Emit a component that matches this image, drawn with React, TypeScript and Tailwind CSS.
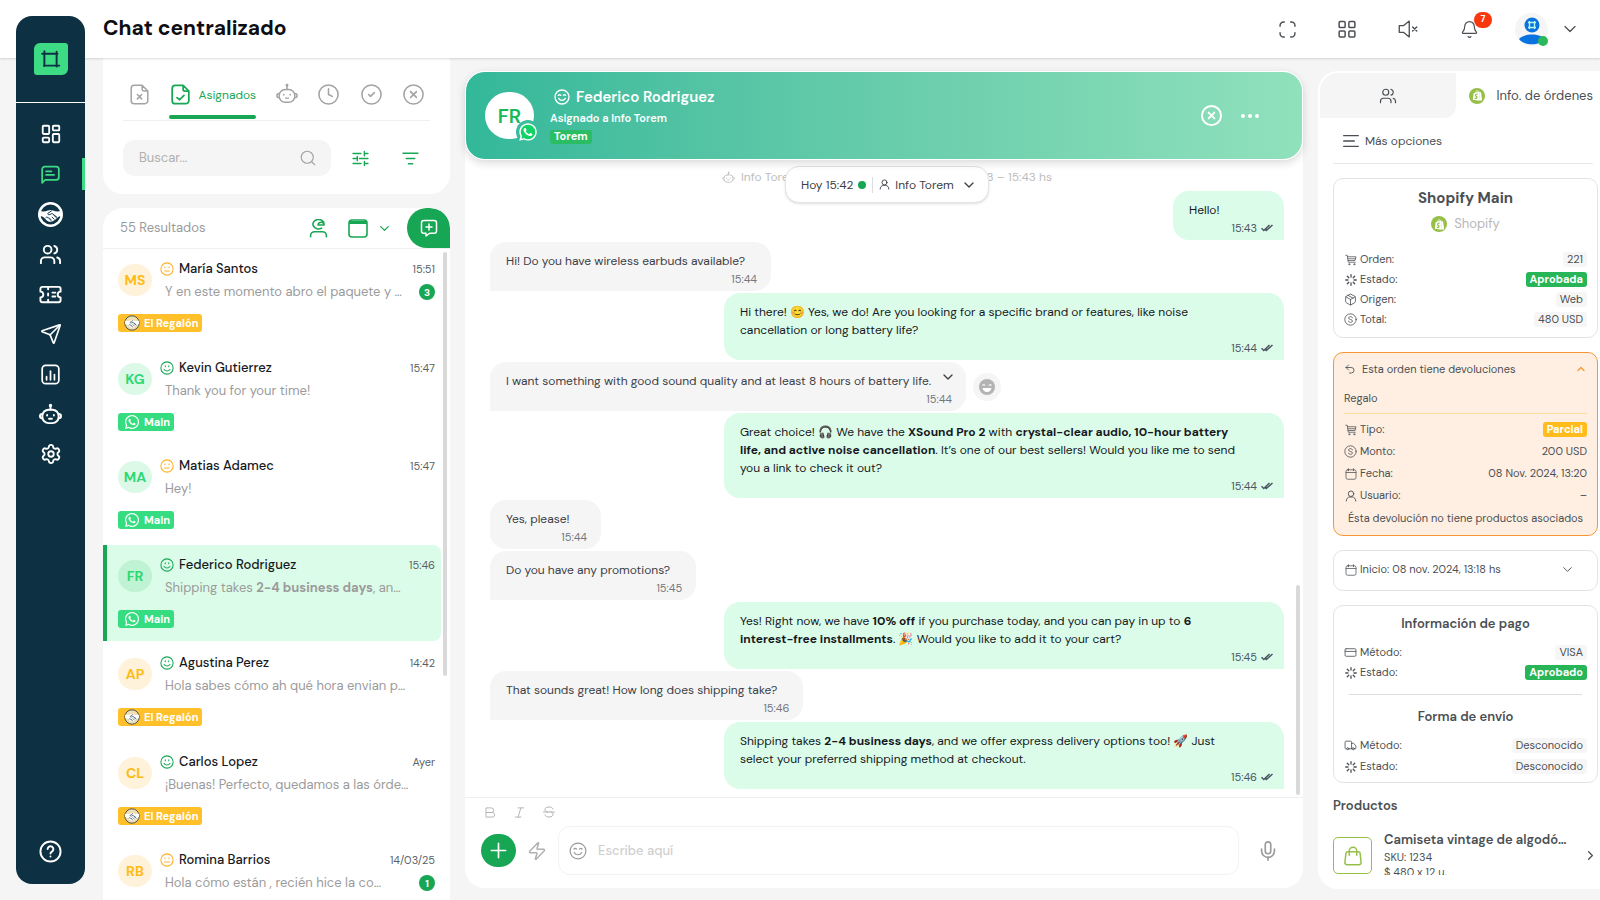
import React from 'react';
import {
  Bell,
  ChevronDown,
  ChevronRight,
  ChevronUp,
  CircleCheck,
  CircleX,
  Clock,
  CreditCard,
  LayoutDashboard,
  Mic,
  Package,
  Search,
  Send,
  Settings,
  Truck,
  Undo2,
  Users,
  Zap,
} from 'lucide-react';
import { FaShopify, FaWhatsapp } from 'react-icons/fa';

type IconProps = { size?: number; stroke?: number; className?: string };

function Svg({ size = 24, stroke = 2, className, children }: IconProps & { children: React.ReactNode }) {
  return (
    <svg
      width={size}
      height={size}
      viewBox="0 0 24 24"
      fill="none"
      stroke="currentColor"
      strokeWidth={stroke}
      strokeLinecap="round"
      strokeLinejoin="round"
      className={className}
      aria-hidden="true"
    >
      {children}
    </svg>
  );
}

const BotIcon = (p: IconProps) => (
  <Svg {...p}>
    <circle cx="12" cy="2.5" r="0.8" />
    <path d="M12 3.500V7" />
    <path d="M3.500 16c-1.800 0-2.500-.8-2.500-2.200s.7-2.300 2.500-2.300M20.500 16c1.800 0 2.500-.8 2.500-2.200s-.7-2.300-2.500-2.300" />
    <rect x="3.500" y="7" width="17" height="14" rx="6.500" />
    <path d="M8.500 12.500v.5M15.500 12.500v.5M10.500 16.500h3" />
  </Svg>
);

const FileXIcon = (p: IconProps) => (
  <Svg {...p}>
    <path d="M15 1.500H6a3.500 3.500 0 0 0-3.500 3.500v14A3.500 3.500 0 0 0 6 22.500h12a3.500 3.500 0 0 0 3.500-3.500V8zM15 1.500V6a2 2 0 0 0 2 2h4.500" />
    <path d="m9.500 12 5 5M14.500 12l-5 5" />
  </Svg>
);

const FileCheckIcon = (p: IconProps) => (
  <Svg {...p}>
    <path d="M15 1.500H6a3.500 3.500 0 0 0-3.500 3.500v14A3.500 3.500 0 0 0 6 22.500h12a3.500 3.500 0 0 0 3.500-3.500V8zM15 1.500V6a2 2 0 0 0 2 2h4.500" />
    <path d="m8 15.500 3 2.500 5-5" />
  </Svg>
);

const MuteIcon = (p: IconProps) => (
  <Svg {...p}>
    <path d="M13.500 2.500v19L6.500 16H1.500V8h5zM17.500 9.500l5 5M22.500 9.500l-5 5" />
  </Svg>
);

const ChatIcon = (p: IconProps) => (
  <Svg {...p}>
    <path d="M2.500 21.500V6a3 3 0 0 1 3-3h13a3 3 0 0 1 3 3v9a3 3 0 0 1-3 3H6z" />
    <path d="M7 8.500h6M7 12.500h9" />
  </Svg>
);

const TicketIcon = (p: IconProps) => (
  <Svg {...p}>
    <path d="M1.500 9V6a2 2 0 0 1 2-2h17a2 2 0 0 1 2 2v3a3 3 0 0 0 0 6v3a2 2 0 0 1-2 2h-17a2 2 0 0 1-2-2v-3a3 3 0 0 0 0-6z" />
    <path d="M9.500 4.500v2M9.500 11v2M9.500 17.500v2M14 10h3M14 14h3" />
  </Svg>
);

const ReportIcon = (p: IconProps) => (
  <Svg {...p}>
    <rect x="2.500" y="1.500" width="19" height="21" rx="4" />
    <path d="M7.500 18v-3.500M12 18V8M16.500 18v-6" />
  </Svg>
);

const HelpIcon = (p: IconProps) => (
  <Svg {...p}>
    <circle cx="12" cy="12" r="10.500" />
    <path d="M9 9.500a3 3 0 1 1 4.500 2.600c-1 .6-1.500 1-1.500 2M12 17.200v.1" />
  </Svg>
);

const SmileIcon = (p: IconProps) => (
  <Svg {...p}>
    <circle cx="12" cy="12" r="10.500" />
    <path d="M9 8v2M15 8v2M7 14.500c1.200 1.800 3 2.500 5 2.500s3.800-.7 5-2.500" />
  </Svg>
);

const MehIcon = (p: IconProps) => (
  <Svg {...p}>
    <circle cx="12" cy="12" r="10.500" />
    <path d="M8.500 8.500v1.500M15.500 8.500v1.500M8 15.500h8" />
  </Svg>
);

const HappyIcon = (p: IconProps) => (
  <Svg {...p}>
    <circle cx="12" cy="12" r="10.500" />
    <path d="M6.500 9.500c.8-1.200 2.700-1.200 3.500 0M14 9.500c.8-1.200 2.700-1.200 3.500 0M7 14c1.200 2.200 3 3 5 3s3.800-.8 5-3" />
  </Svg>
);

const PersonIcon = (p: IconProps) => (
  <Svg {...p}>
    <circle cx="12" cy="7.500" r="5.500" />
    <path d="M2.500 22c0-5 3.500-8 7-8h5c3.500 0 7 3 7 8" />
  </Svg>
);

const AgentIcon = (p: IconProps) => (
  <Svg {...p}>
    <path d="M19 7a7 6 0 1 0-3 4.500M11.500 7.500H19c0-2-1.500-3.500-3.500-3.500-2.500 0-4 1.500-4 3.500z" />
    <path d="M2 22.500v-1.500a5 5 0 0 1 5-5h10a5 5 0 0 1 5 5v1.500" />
  </Svg>
);

const CalendarIcon = (p: IconProps) => (
  <Svg {...p}>
    <rect x="2" y="3.500" width="20" height="19" rx="3.500" />
    <path d="M2 9h20M7 1.500v4M17 1.500v4" />
  </Svg>
);

const CartIcon = (p: IconProps) => (
  <Svg {...p}>
    <path d="M1.500 2.500h3l2 14h14M5 5.500h17l-2 7.500H6.500M6 9.500h15" />
    <circle cx="8.500" cy="20.500" r="1.200" />
    <circle cx="18.500" cy="20.500" r="1.200" />
  </Svg>
);

const LoaderIcon = (p: IconProps) => (
  <Svg stroke={2.6} {...p}>
    <path d="M12 1.500V6M12 18v4.500M1.500 12H6M18 12h4.500M4.600 4.600l3 3M16.400 16.400l3 3M4.600 19.400l3-3M16.400 7.600l3-3" />
  </Svg>
);

const CoinIcon = (p: IconProps) => (
  <Svg {...p}>
    <circle cx="12" cy="12" r="10.500" />
    <path d="M15.500 9c-.3-1.500-1.700-2.300-3.500-2.300-2 0-3.500 1-3.500 2.600 0 3.700 7 1.700 7 5.400 0 1.600-1.500 2.600-3.500 2.600-1.800 0-3.200-.8-3.500-2.300" />
  </Svg>
);

const SlidersIcon = (p: IconProps) => (
  <Svg {...p}>
    <path d="M1.500 5h11M17.500 5h5M17.500 2v6M1.500 12h5M10.500 12h12M7.500 9v6M1.500 19h11M17.500 19h5M17.500 16v6" />
  </Svg>
);

const GridIcon = (p: IconProps) => (
  <Svg {...p}>
    <rect x="1.500" y="2" width="8" height="8" rx="1.500" />
    <rect x="14.500" y="2" width="8" height="8" rx="1.500" />
    <rect x="1.500" y="14.500" width="8" height="8" rx="1.500" />
    <rect x="14.500" y="14.500" width="8" height="8" rx="1.500" />
  </Svg>
);

const ExpandIcon = (p: IconProps) => (
  <Svg {...p}>
    <path d="M1.500 7.500v-1a5 5 0 0 1 5-5h1M16.500 1.500h1a5 5 0 0 1 5 5v1M22.500 16.500v1a5 5 0 0 1-5 5h-1M7.500 22.500h-1a5 5 0 0 1-5-5v-1" />
  </Svg>
);

const BagIcon = (p: IconProps) => (
  <Svg {...p}>
    <path d="M5.500 7h13a2 2 0 0 1 2 1.800l1.200 11a2.500 2.500 0 0 1-2.500 2.700H4.800a2.500 2.500 0 0 1-2.500-2.700l1.200-11a2 2 0 0 1 2-1.800z" />
    <path d="M7.500 11V6a4.500 4.500 0 0 1 9 0v5" />
  </Svg>
);

const DoubleCheck = () => (
  <svg width="12" height="8" viewBox="0 0 12 8" fill="none" stroke="#4b5563" strokeWidth="1.500" aria-hidden="true">
    <path d="M.5 4.200 2.800 6.500l5.700-5.500M4.300 5.500l1 1L11.500 1" />
  </svg>
);

function HandshakeLogo({ size, light }: { size: number; light?: boolean }) {
  return (
    <svg width={size} height={size} viewBox="0 0 24 24" aria-hidden="true">
      <circle
        cx="12"
        cy="12"
        r="10.800"
        fill={light ? '#f0dfb4' : '#0d3142'}
        stroke={light ? '#3f4b50' : '#fff'}
        strokeWidth={light ? 1.4 : 2.4}
      />
      <path
        d="M1.500 8.500c3 1 5.500.8 8-.3 2-.8 3.500-.6 5 0 2.500 1 5 1.200 8 .3v5c-2 .3-3.500 1-4.500 2.200-2 2-4 3.300-6 3.300s-3.500-1.200-5-2.800c-1.500-1.600-3-2.500-5.500-2.700z"
        fill="#fff"
      />
      <path
        d="M13 8.500 9.500 10.800c-.6 1.200.8 1.800 2 1.200l2-1 4.500 3.500M7.500 15c1-1 2-.5 2 .5 1-.5 1.800 0 1.700 1 1-.3 1.600.3 1.300 1.300M13.500 14.500l2 2M15.500 13l2 2"
        fill="none"
        stroke="#0d3142"
        strokeWidth="0.900"
        strokeLinecap="round"
      />
    </svg>
  );
}

function ShopifyLogo() {
  return (
    <span className="flex size-4 items-center justify-center rounded-full bg-[#95bf47] text-white">
      <FaShopify size={11} />
    </span>
  );
}

const navItems = [
  { label: 'Inicio', icon: <LayoutDashboard size={22} strokeWidth={2} /> },
  { label: 'Chat', icon: <ChatIcon size={21} />, active: true },
  { label: 'Acuerdos', icon: <HandshakeLogo size={25} /> },
  { label: 'Contactos', icon: <Users size={23} strokeWidth={2} /> },
  { label: 'Tickets', icon: <TicketIcon size={23} /> },
  { label: 'Campañas', icon: <Send size={22} strokeWidth={1.8} /> },
  { label: 'Reportes', icon: <ReportIcon size={21} /> },
  { label: 'Bots', icon: <BotIcon size={23} /> },
  { label: 'Ajustes', icon: <Settings size={22} strokeWidth={2} /> },
];

function Sidebar() {
  return (
    <aside className="z-20 col-start-1 row-span-2 row-start-1 mb-4 ml-4 mr-[18px] mt-4 flex flex-col rounded-2xl bg-[#0d3142] text-white">
      <div className="flex h-[87px] items-center justify-center border-b border-white">
        <span className="flex h-8 w-[34px] items-center justify-center rounded-bl-[3px] rounded-br-md rounded-tl-md rounded-tr-[3px] bg-[#3ddc84] text-[#0d3142]">
          <Svg size={21} stroke={2.2}>
            <path d="M5 2.500v17M2.500 5.500H20M19 3v17M4.500 19H22" />
          </Svg>
        </span>
      </div>
      <nav className="mt-[11px] flex flex-col" aria-label="Principal">
        {navItems.map((item) => (
          <a
            key={item.label}
            href="#"
            aria-label={item.label}
            className={`relative flex h-10 items-center justify-center ${item.active ? 'text-[#3ddc84]' : 'text-white'}`}
          >
            {item.icon}
            {item.active && <span className="absolute right-0 top-1 h-8 w-[3px] bg-[#3ddc84]" />}
          </a>
        ))}
      </nav>
      <a href="#" aria-label="Ayuda" className="mb-[21px] mt-auto flex justify-center">
        <HelpIcon size={23} />
      </a>
    </aside>
  );
}

function TopBar() {
  return (
    <header className="z-10 col-span-2 col-start-1 row-start-1 flex items-center bg-white pl-[103px] pr-5 text-[#4b4f54] shadow-[0_1px_2px_rgba(0,0,0,0.15)]">
      <h1 className="pb-[3px] text-[21px] font-bold leading-7 text-[#0d0d12]">Chat centralizado</h1>
      <div className="ml-auto flex items-center">
        <button aria-label="Pantalla completa" className="mr-[42px]"><ExpandIcon size={17} /></button>
        <button aria-label="Aplicaciones" className="mr-[42px]"><GridIcon size={18} /></button>
        <button aria-label="Silenciar" className="mr-[42px]"><MuteIcon size={20} stroke={1.6} /></button>
        <button aria-label="Notificaciones" className="relative mr-9">
          <Bell size={19} strokeWidth={1.5} />
          <span className="absolute -top-2 left-[14px] flex h-4 w-[18px] items-center justify-center rounded-full bg-[#f9370e] text-[9px] font-bold text-white">
            7
          </span>
        </button>
        <button aria-label="Perfil" className="relative mr-3 size-[33px] rounded-full bg-[#f5f5f5]">
          <svg viewBox="0 0 33 33" className="size-full" aria-hidden="true">
            <circle cx="17" cy="12" r="7.500" fill="#0a73e0" />
            <path d="M4 26c5-6 21-6 26 0-5 7-21 7-26 0z" fill="#0a73e0" />
            <path d="M14.500 8v8M19.500 8v8M13 9.500h8M13 14.500h8" stroke="#b9f5e6" strokeWidth="1.400" />
            <circle cx="28" cy="28" r="5" fill="#2bb75b" />
          </svg>
        </button>
        <button aria-label="Abrir menú"><ChevronDown size={20} strokeWidth={1.5} /></button>
      </div>
    </header>
  );
}

function Filters() {
  return (
    <section className="rounded-b-[20px] bg-white px-5 pb-[18px] pt-5 text-[#a3a3a3]">
      <div className="flex h-[43px] items-start justify-between border-b border-[#efefef] pl-[6px] pr-[5px]">
        <button aria-label="Sin asignar" className="pt-1.5"><FileXIcon size={21} stroke={1.7} /></button>
        <button className="relative flex h-[41px] items-start gap-[7px] pl-px pt-1.5 text-[#17a653]">
          <FileCheckIcon size={21} />
          <span className="text-xs leading-[22px]">Asignados</span>
          <span className="absolute inset-x-0 bottom-0 h-1 rounded-full bg-[#17a653]" />
        </button>
        <button aria-label="Bots" className="pt-[5px]"><BotIcon size={22} stroke={1.6} /></button>
        <button aria-label="Pendientes" className="pt-[5px]"><Clock size={23} strokeWidth={1.6} /></button>
        <button aria-label="Resueltos" className="pt-[5px]"><CircleCheck size={23} strokeWidth={1.6} /></button>
        <button aria-label="Cerrados" className="pt-[5px]"><CircleX size={23} strokeWidth={1.6} /></button>
      </div>
      <div className="mt-[19px] flex items-center">
        <label className="flex h-9 w-[208px] items-center rounded-xl bg-[#f5f5f5] pl-4 pr-[14px]">
          <input
            aria-label="Buscar"
            placeholder="Buscar..."
            className="min-w-0 flex-1 bg-transparent text-[13px] outline-none placeholder:text-[#b0b0b0]"
          />
          <Search size={18} strokeWidth={1.5} />
        </label>
        <button aria-label="Filtros" className="ml-[21px] text-[#17a653]"><SlidersIcon size={17} /></button>
        <button aria-label="Ordenar" className="ml-[33px] text-[#17a653]">
          <Svg size={17}><path d="M1.500 4.500h21M6 12h12M9 19.500h6" /></Svg>
        </button>
      </div>
    </section>
  );
}

type Conversation = {
  initials: string;
  name: string;
  time: string;
  preview: React.ReactNode;
  mood: 'happy' | 'meh';
  channel: 'main' | 'regalon';
  unread?: number;
  selected?: boolean;
};

const conversations: Conversation[] = [
  { initials: 'MS', name: 'María Santos', time: '15:51', preview: 'Y en este momento abro el paquete y …', mood: 'meh', channel: 'regalon', unread: 3 },
  { initials: 'KG', name: 'Kevin Gutierrez', time: '15:47', preview: 'Thank you for your time!', mood: 'happy', channel: 'main' },
  { initials: 'MA', name: 'Matias Adamec', time: '15:47', preview: 'Hey!', mood: 'meh', channel: 'main' },
  { initials: 'FR', name: 'Federico Rodriguez', time: '15:46', preview: <>Shipping takes <b>2-4 business days</b>, an…</>, mood: 'happy', channel: 'main', selected: true },
  { initials: 'AP', name: 'Agustina Perez', time: '14:42', preview: 'Hola sabes cómo ah qué hora envian p…', mood: 'happy', channel: 'regalon' },
  { initials: 'CL', name: 'Carlos Lopez', time: 'Ayer', preview: '¡Buenas! Perfecto, quedamos a las órde…', mood: 'happy', channel: 'regalon' },
  { initials: 'RB', name: 'Romina Barrios', time: '14/03/25', preview: 'Hola cómo están , recién hice la co…', mood: 'meh', channel: 'regalon', unread: 1 },
];

function avatarColors(c: Conversation) {
  if (c.selected) return 'bg-[#bff3d4] text-[#2fd873]';
  return c.channel === 'main' ? 'bg-[#dcf9e8] text-[#2fd873]' : 'bg-[#fff2da] text-[#fdbb16]';
}

function ConversationRow({ c }: { c: Conversation }) {
  return (
    <li className={`mb-[3px] mr-[9px] h-24 rounded-r-lg border-l-4 pl-[11px] pr-[6px] pt-[9px] even:mb-[2px] ${c.selected ? 'border-[#17a653] bg-[#dbfce9]' : 'border-transparent'}`}>
      <div className="flex">
        <span className={`mt-[6px] flex h-8 w-[34px] shrink-0 items-center justify-center rounded-full text-sm font-bold ${avatarColors(c)}`}>
          {c.initials}
        </span>
        <div className="ml-2 min-w-0 flex-1">
          <div className="flex h-[22px] items-center">
            {c.mood === 'happy' ? (
              <SmileIcon size={14} stroke={1.8} className="text-[#17a653]" />
            ) : (
              <MehIcon size={14} stroke={1.8} className="text-[#fdb022]" />
            )}
            <h3 className="ml-[5px] text-[13px] font-medium text-[#16181d]">{c.name}</h3>
            <time className="ml-auto text-[11px] text-[#5b5f66]">{c.time}</time>
          </div>
          <div className="flex h-6 items-center pl-[5px]">
            <p className="whitespace-nowrap text-[13px] text-[#9b9b9b]">{c.preview}</p>
            {c.unread && (
              <span className="ml-auto flex size-4 items-center justify-center rounded-full bg-[#17a653] text-[10px] font-bold text-white">
                {c.unread}
              </span>
            )}
          </div>
        </div>
      </div>
      <span
        className={`mt-[10px] inline-flex h-[18px] items-center gap-1 rounded-[3px] pl-1.5 pr-1 text-[11px] font-bold text-white ${c.channel === 'main' ? 'bg-[#36dd80]' : 'bg-[#ffc02a]'}`}
      >
        {c.channel === 'main' ? <FaWhatsapp size={16} /> : <HandshakeLogo size={16} light />}
        {c.channel === 'main' ? 'Main' : 'El Regalón'}
      </span>
    </li>
  );
}

function ConversationList() {
  return (
    <section className="relative mt-[14px] min-h-0 flex-1 overflow-hidden rounded-t-[20px] bg-white">
      <div className="flex h-[41px] items-center border-b border-[#efefef] pl-[17px] text-[#17a653]">
        <p className="text-[13px] text-[#9b9b9b]">55 Resultados</p>
        <button aria-label="Agentes" className="ml-auto mr-5"><AgentIcon size={19} /></button>
        <button aria-label="Fechas" className="mr-[9px]">
          <svg width="20" height="19" viewBox="0 0 20 19" fill="none" stroke="currentColor" strokeWidth="1.600" aria-hidden="true">
            <rect x="1" y="1" width="18" height="17" rx="3" />
            <path d="M1 3.500h18" strokeWidth="3" />
          </svg>
        </button>
        <button aria-label="Ver opciones" className="mr-[15px]"><ChevronDown size={15} /></button>
        <button aria-label="Nuevo chat" className="flex w-[43px] items-center justify-center self-stretch rounded-[20px] rounded-br-none bg-[#17a653] text-white">
          <Svg size={18}>
            <path d="M5 2h14a3 3 0 0 1 3 3v11a3 3 0 0 1-3 3h-6l-5 3.500V19H5a3 3 0 0 1-3-3V5a3 3 0 0 1 3-3zM12 6.500v8M8 10.500h8" />
          </Svg>
        </button>
      </div>
      <ul>
        {conversations.map((c) => (
          <ConversationRow key={c.name} c={c} />
        ))}
      </ul>
      <span className="absolute right-[3px] top-11 h-[424px] w-1 rounded-full bg-[#d9d9d9]" />
    </section>
  );
}

type Message = {
  text: React.ReactNode;
  time: string;
  mine?: boolean;
  round?: boolean;
  long?: boolean;
};

const messages: Message[] = [
  { text: 'Hello!', time: '15:43', mine: true },
  { text: 'Hi! Do you have wireless earbuds available?', time: '15:44' },
  { text: 'Hi there! 😊 Yes, we do! Are you looking for a specific brand or features, like noise cancellation or long battery life?', time: '15:44', mine: true },
  { text: 'I want something with good sound quality and at least 8 hours of battery life.', time: '15:44', long: true },
  {
    text: (
      <>
        Great choice! 🎧 We have the <b>XSound Pro 2</b> with <b>crystal-clear audio, 10-hour battery life, and active noise cancellation</b>. It’s one of our best sellers! Would you like me to send you a link to check it out?
      </>
    ),
    time: '15:44',
    mine: true,
  },
  { text: 'Yes, please!', time: '15:44', round: true },
  { text: 'Do you have any promotions?', time: '15:45' },
  {
    text: (
      <>
        Yes! Right now, we have <b>10% off</b> if you purchase today, and you can pay in up to <b>6 <span className="whitespace-nowrap">interest-free</span> installments</b>. 🎉 Would you like to add it to your cart?
      </>
    ),
    time: '15:45',
    mine: true,
  },
  { text: 'That sounds great! How long does shipping take?', time: '15:46' },
  {
    text: (
      <>
        Shipping takes <b>2-4 business days</b>, and we offer express delivery options too! 🚀 Just select your preferred shipping method at checkout.
      </>
    ),
    time: '15:46',
    mine: true,
  },
];

function Bubble({ m }: { m: Message }) {
  if (m.mine) {
    return (
      <li className="flex min-w-[111px] max-w-[560px] flex-col self-end rounded-2xl rounded-br-none bg-[#dbfce9] pb-1 pl-4 pr-[11px] pt-[10px] text-[#16181d]">
        <p className="pr-[33px] text-xs leading-[18px]">{m.text}</p>
        <span className="mt-px flex items-center justify-end gap-1 text-[11px] leading-4 text-[#4b5563]">
          {m.time}
          <DoubleCheck />
        </span>
      </li>
    );
  }
  return (
    <li className="flex max-w-[560px] items-center gap-[7px] self-start">
      <div className={`relative flex min-w-[111px] flex-col rounded-2xl bg-[#f5f5f5] pb-1 pl-4 pr-[14px] pt-[10px] ${m.round ? '' : 'rounded-bl-none'} ${m.long ? 'w-[476px]' : ''}`}>
        <p className={`text-xs leading-[18px] text-[#3c4046] ${m.long ? 'whitespace-nowrap' : 'pr-3'}`}>{m.text}</p>
        <span className="mt-px text-right text-[11px] leading-4 text-[#73777d]">{m.time}</span>
        {m.long && (
          <button aria-label="Opciones del mensaje" className="absolute right-[10px] top-[7px] text-[#3c4046]">
            <ChevronDown size={16} strokeWidth={2} />
          </button>
        )}
      </div>
      {m.long && (
        <button aria-label="Reaccionar" className="flex size-7 items-center justify-center rounded-full bg-[#f5f5f5]">
          <svg width="16" height="16" viewBox="0 0 16 16" aria-hidden="true">
            <circle cx="8" cy="8" r="8" fill="#b3b3b3" />
            <path d="M3.500 6.500c.5-1 2-1 2.500 0M10 6.500c.5-1 2-1 2.500 0" stroke="#fff" strokeWidth="1.200" fill="none" />
            <path d="M3.500 9h9c-.5 2.500-2.200 4-4.500 4S4 11.500 3.500 9z" fill="#fff" />
          </svg>
        </button>
      )}
    </li>
  );
}

function ChatHeader() {
  return (
    <header className="z-10 flex h-[89px] shrink-0 items-center rounded-[20px] border border-white bg-linear-to-r from-[#32b89a] to-[#90e1bc] pl-[19px] pr-[42px] text-white shadow-[0_3px_8px_rgba(0,0,0,0.15)]">
      <div className="relative flex h-[47px] w-[49px] items-center justify-center rounded-full bg-white text-xl font-semibold text-[#17b855]">
        FR
        <span className="absolute -bottom-[5px] -right-[6px] flex size-6 items-center justify-center rounded-full bg-[#3cbc9e]">
          <svg width="20" height="20" viewBox="0 0 20 20" aria-hidden="true">
            <circle cx="10" cy="10" r="8.500" fill="#12d366" />
            <FaWhatsapp size={20} color="#fff" />
          </svg>
        </span>
      </div>
      <div className="ml-4 pb-[2px]">
        <h2 className="flex items-center gap-[6px] pl-1 text-[15px] font-semibold leading-[22px]">
          <HappyIcon size={16} />
          Federico Rodriguez
        </h2>
        <p className="text-[11px] font-semibold leading-5">Asignado a Info Torem</p>
        <span className="mt-[2px] flex h-[14px] w-fit items-center rounded-[3px] bg-[#2bbd63] px-1 text-[11px] font-bold">Torem</span>
      </div>
      <button aria-label="Cerrar chat" className="ml-auto mr-[17px]"><CircleX size={23} strokeWidth={2} /></button>
      <button aria-label="Más acciones">
        <svg width="20" height="6" viewBox="0 0 20 6" fill="currentColor" aria-hidden="true">
          <circle cx="3" cy="3" r="2" />
          <circle cx="10" cy="3" r="2" />
          <circle cx="17" cy="3" r="2" />
        </svg>
      </button>
    </header>
  );
}

function Composer() {
  return (
    <footer className="h-[91px] shrink-0 border-t border-[#efefef] px-4 text-[#b0b0b0]">
      <div className="flex h-7 items-center gap-[18px] pl-1">
        <button aria-label="Negrita"><Svg size={11}><path d="M3 2h11a5 5 0 0 1 0 10H3zM3 12h13a5 5 0 0 1 0 10H3z" /></Svg></button>
        <button aria-label="Cursiva"><Svg size={11}><path d="M9 2h12M3 22h12M15 2 9 22" /></Svg></button>
        <button aria-label="Tachado"><Svg size={12}><path d="M20 6c-1-3-4-4-8-4-5 0-8 2-8 5s2 4 5 5M4 18c1 3 4 4 8 4 5 0 8-2 8-5s-2-4-4-5M1 12h22" /></Svg></button>
      </div>
      <div className="flex items-center">
        <button aria-label="Adjuntar" className="flex h-[33px] w-[35px] items-center justify-center rounded-full bg-[#17a653] text-white">
          <Svg size={17} stroke={2.4}><path d="M12 2v20M2 12h20" /></Svg>
        </button>
        <button aria-label="Respuestas rápidas" className="ml-[11px] mr-[11px]"><Zap size={20} strokeWidth={1.8} /></button>
        <label className="flex h-[49px] flex-1 items-center gap-[11px] rounded-xl border border-[#f3f3f3] pl-[10px]">
          <HappyIcon size={18} stroke={1.6} className="text-[#9b9b9b]" />
          <input aria-label="Mensaje" placeholder="Escribe aquí" className="flex-1 bg-transparent text-[13px] font-medium outline-none placeholder:text-[#d0d0d0]" />
        </label>
        <button aria-label="Grabar audio" className="ml-[18px] mr-2 text-[#9b9b9b]"><Mic size={22} strokeWidth={1.8} /></button>
      </div>
    </footer>
  );
}

function Chat() {
  return (
    <section className="relative mx-[15px] mb-3 mt-[13px] flex min-w-0 flex-1 flex-col rounded-[20px] bg-white">
      <ChatHeader />
      <div className="relative flex min-h-0 flex-1 flex-col justify-end overflow-hidden pb-2 pl-[25px] pr-[19px]">
        <div className="mb-1 flex h-5 w-[330px] items-center self-center text-xs text-[#bdbdbd]">
          <BotIcon size={13} stroke={1.5} />
          <span className="ml-[6px]">Info Torem</span>
          <span className="ml-auto">14/03 – 15:43 hs</span>
        </div>
        <ul className="flex flex-col gap-[2px]">
          {messages.map((m, i) => (
            <Bubble key={i} m={m} />
          ))}
        </ul>
        <span className="absolute bottom-[2px] right-[3px] h-[210px] w-1 rounded-full bg-[#d9d9d9]" />
      </div>
      <button className="absolute left-[320px] top-[95px] flex h-[37px] w-[204px] items-center rounded-[14px] border border-[#e5e5e5] bg-white pl-[15px] text-xs text-[#3c4046] shadow-sm">
        Hoy 15:42
        <span className="ml-[5px] size-2 rounded-full bg-[#17a653]" />
        <span className="ml-[6px] h-4 w-px bg-[#dcdcdc]" />
        <PersonIcon size={11} className="ml-[6px] mr-[5px]" />
        Info Torem
        <ChevronDown size={16} className="ml-auto mr-[11px]" />
      </button>
      <Composer />
    </section>
  );
}

type Tone = 'green' | 'amber' | 'gray' | 'plain';

const tones: Record<Tone, string> = {
  green: 'bg-[#27b558] font-bold text-white',
  amber: 'bg-[#ffbc1c] font-bold text-white',
  gray: 'bg-[#f6f6f6]',
  plain: '',
};

function Field({ icon, label, value, tone = 'gray' }: { icon: React.ReactNode; label: string; value: string; tone?: Tone }) {
  return (
    <div className="flex h-[15px] items-center">
      <span className="mr-[3px] flex w-[13px] justify-center">{icon}</span>
      <dt>{label}</dt>
      <dd className={`ml-auto flex h-[15px] items-center rounded-[3px] ${tone === 'plain' ? '' : 'px-1'} ${tones[tone]}`}>{value}</dd>
    </div>
  );
}

function OrderPanel() {
  return (
    <aside className="mb-[11px] mt-[13px] flex w-[282px] shrink-0 flex-col overflow-hidden rounded-l-[20px] bg-white pb-[14px] text-[11px] text-[#4b4f54]">
      <div className="flex h-[47px] shrink-0 pl-[2px] pt-[2px]">
        <button aria-label="Contacto" className="flex w-[136px] items-center justify-center rounded-br-xl rounded-tl-[18px] bg-[#f5f5f5]">
          <Users size={18} strokeWidth={1.6} />
        </button>
        <button className="flex flex-1 items-center justify-end gap-[11px] whitespace-nowrap pr-[7px] text-[13px]">
          <ShopifyLogo />
          Info. de órdenes
        </button>
      </div>
      <div className="flex min-h-0 flex-1 flex-col overflow-hidden pl-[15px] pr-[2px]">
        <button className="mr-[5px] flex h-[46px] shrink-0 items-center gap-[6px] border-b border-[#e9e9e9] pl-[10px] text-xs">
          <Svg size={16}><path d="M1 4h22M1 12h16M1 20h22" /></Svg>
          Más opciones
        </button>

        <section className="mt-[14px] h-[160px] shrink-0 rounded-[10px] border border-[#e3e3e3] px-[10px] pt-[9px]">
          <h2 className="text-center text-[15px] font-bold leading-5">Shopify Main</h2>
          <p className="mt-[6px] flex items-center justify-center gap-[7px] text-[13px] leading-5 text-[#b8b8b8]">
            <ShopifyLogo />
            Shopify
          </p>
          <dl className="mt-[18px] flex flex-col gap-[5px]">
            <Field icon={<CartIcon size={12} stroke={1.5} />} label="Orden:" value="221" />
            <Field icon={<LoaderIcon size={12} />} label="Estado:" value="Aprobada" tone="green" />
            <Field icon={<Package size={13} strokeWidth={1.5} />} label="Origen:" value="Web" />
            <Field icon={<CoinIcon size={13} stroke={1.5} />} label="Total:" value="480 USD" />
          </dl>
        </section>

        <section className="mt-[14px] h-[184px] shrink-0 rounded-[10px] border border-[#f79633] bg-[#feefe2] px-[10px] pt-[9px]">
          <button className="flex w-full items-center leading-[14px]">
            <Undo2 size={12} strokeWidth={1.7} />
            <span className="ml-[6px]">Esta orden tiene devoluciones</span>
            <ChevronUp size={12} strokeWidth={2.5} className="ml-auto text-[#f79633]" />
          </button>
          <p className="mt-[15px] border-b border-[#ffdc9c] pb-2 leading-[14px]">Regalo</p>
          <dl className="mt-2 flex flex-col gap-[7px]">
            <Field icon={<CartIcon size={12} stroke={1.5} />} label="Tipo:" value="Parcial" tone="amber" />
            <Field icon={<CoinIcon size={13} stroke={1.5} />} label="Monto:" value="200 USD" tone="plain" />
            <Field icon={<CalendarIcon size={12} stroke={1.5} />} label="Fecha:" value="08 Nov. 2024, 13:20" tone="plain" />
            <Field icon={<PersonIcon size={12} stroke={1.8} />} label="Usuario:" value="–" tone="plain" />
          </dl>
          <p className="mt-2 whitespace-nowrap text-center leading-[14px]">Ésta devolución no tiene productos asociados</p>
        </section>

        <button className="mt-[14px] flex h-[41px] shrink-0 items-center rounded-[10px] border border-[#e3e3e3] pb-[2px] pl-[11px] pr-[22px]">
          <CalendarIcon size={12} stroke={1.5} />
          <span className="ml-[3px]">Inicio: 08 nov. 2024, 13:18 hs</span>
          <ChevronDown size={15} strokeWidth={1.5} className="ml-auto" />
        </button>

        <section className="mt-[14px] h-[178px] shrink-0 rounded-[10px] border border-[#e3e3e3] px-[10px] pt-2">
          <h2 className="text-center text-[13px] font-semibold leading-5">Información de pago</h2>
          <dl className="mt-[11px] flex flex-col gap-[5px]">
            <Field icon={<CreditCard size={13} strokeWidth={1.5} />} label="Método:" value="VISA" />
            <Field icon={<LoaderIcon size={12} />} label="Estado:" value="Aprobado" tone="green" />
          </dl>
          <hr className="mx-[5px] mt-[14px] border-[#dcdfe2]" />
          <h2 className="mt-3 text-center text-[13px] font-semibold leading-5">Forma de envío</h2>
          <dl className="mt-[11px] flex flex-col gap-[6px]">
            <Field icon={<Truck size={13} strokeWidth={1.5} />} label="Método:" value="Desconocido" />
            <Field icon={<LoaderIcon size={12} />} label="Estado:" value="Desconocido" />
          </dl>
        </section>

        <h2 className="mt-[13px] shrink-0 text-[13px] font-semibold leading-5">Productos</h2>
        <a href="#" className="mt-[14px] flex shrink-0 items-start">
          <span className="mt-[7px] flex h-[37px] w-[39px] items-center justify-center rounded-[5px] border border-[#95bf47] text-[#95bf47]">
            <BagIcon size={20} stroke={1.8} />
          </span>
          <div className="ml-3 text-[11px] leading-4">
            <h3 className="text-[13px] font-semibold leading-5">Camiseta vintage de algodó…</h3>
            <p className="leading-[14px]">SKU: 1234</p>
            <p>$ 480 x 12 u.</p>
          </div>
          <ChevronRight size={15} className="ml-auto mt-[18px]" />
        </a>
      </div>
    </aside>
  );
}

export default function App() {
  return (
    <div className="grid h-screen grid-cols-[103px_minmax(0,1fr)] grid-rows-[58px_minmax(0,1fr)] overflow-hidden bg-[#f5f5f5] font-['DM_Sans',Inter,'Liberation_Sans',sans-serif]">
      <TopBar />
      <Sidebar />
      <main className="col-start-2 row-start-2 flex min-h-0">
        <div className="flex w-[347px] shrink-0 flex-col">
          <Filters />
          <ConversationList />
        </div>
        <Chat />
        <OrderPanel />
      </main>
    </div>
  );
}
